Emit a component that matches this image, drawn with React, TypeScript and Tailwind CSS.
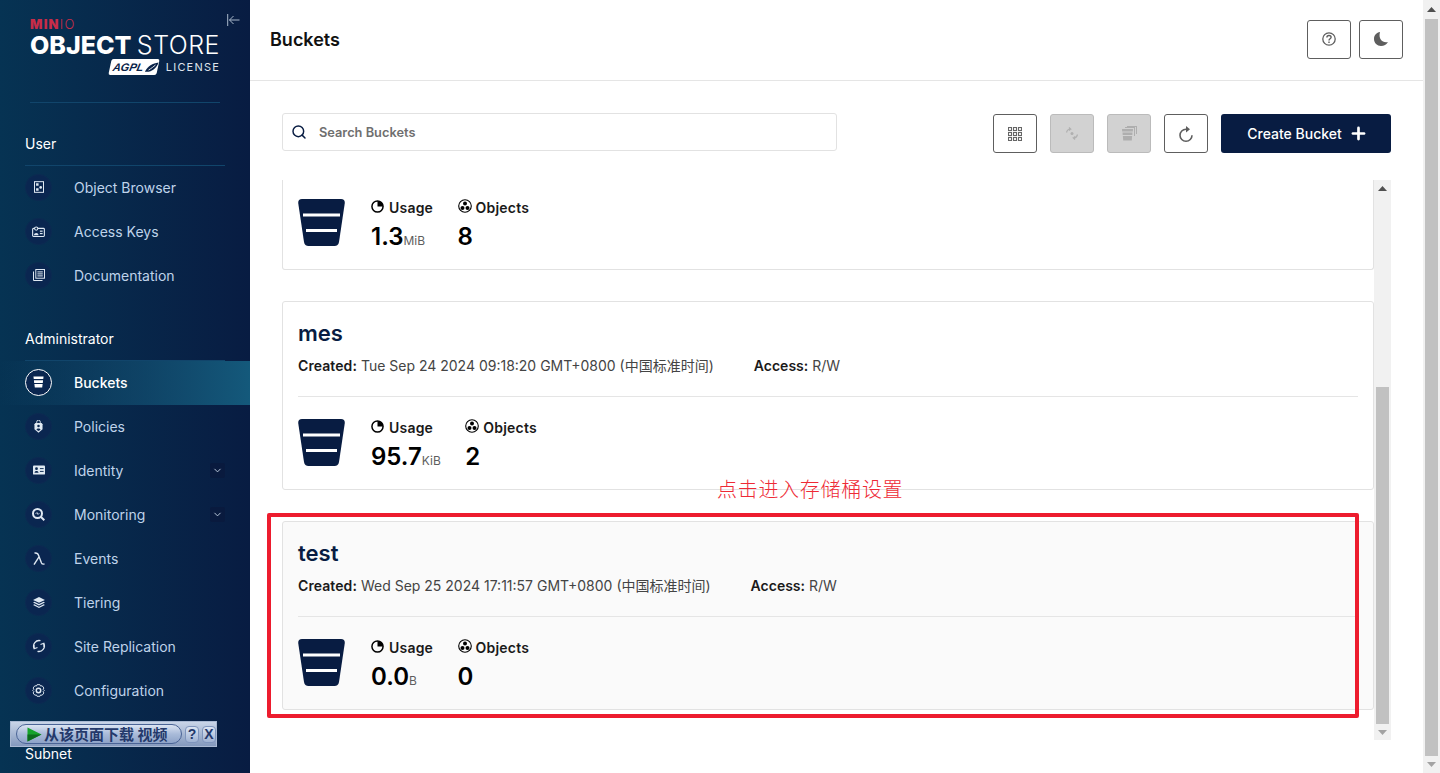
import React from "react";
import { ChevronDown, Plus, Search } from "lucide-react";

const BucketShape = ({ className }: { className?: string }) => (
  <svg viewBox="0 0 47 47" className={className}>
    <path
      d="M4 0H43C45.5 0 47 1.6 46.8 4L41 43C40.6 45.6 39 47 36.5 47H10.5C8 47 6.4 45.6 6 43L0.2 4C0 1.6 1.5 0 4 0Z"
      fill="#081c42"
    />
    <rect x="5" y="14.5" width="37" height="3" fill="#fff" />
    <rect x="8" y="30" width="31" height="3" fill="#fff" />
  </svg>
);

const MenuIcon = ({ name }: { name: string }) => {
  const c = "#dfe8f2";
  switch (name) {
    case "browser":
      return (
        <svg viewBox="0 0 12 14" className="w-[10px] h-[12px]" fill="none">
          <rect x="0.6" y="0.6" width="10.8" height="12.8" stroke={c} strokeWidth="1.2" />
          <rect x="2.5" y="2.5" width="3" height="3" fill={c} />
          <circle cx="8" cy="7.5" r="1.6" fill={c} />
          <rect x="2.5" y="8.5" width="3" height="3" fill={c} />
        </svg>
      );
    case "keys":
      return (
        <svg viewBox="0 0 14 12" className="w-[13px] h-[11px]" fill="none">
          <rect x="0.6" y="2.6" width="12.8" height="8.8" rx="1" stroke={c} strokeWidth="1.2" />
          <circle cx="4.5" cy="2.8" r="1.8" stroke={c} strokeWidth="1.1" fill="#0a2650" />
          <path d="M2 10C2.2 7 7 7 7 10Z" fill={c} />
          <rect x="8.5" y="5" width="3" height="1.3" fill={c} />
          <rect x="8.5" y="7.6" width="3" height="1.3" fill={c} />
        </svg>
      );
    case "docs":
      return (
        <svg viewBox="0 0 12 12" className="w-[12px] h-[12px]" fill="none">
          <rect x="2.8" y="0.5" width="8.7" height="8.7" stroke={c} />
          <path d="M0.5 2.5V11.5H9.5" stroke={c} />
          <rect x="4.4" y="2.4" width="5.4" height="1" fill={c} />
          <rect x="4.4" y="4.4" width="5.4" height="1" fill={c} />
          <rect x="4.4" y="6.4" width="5.4" height="1" fill={c} />
        </svg>
      );
    case "buckets":
      return (
        <svg viewBox="0 0 12 12" className="w-[11px] h-[12px]">
          <path d="M0.5 0H11.5L11.2 2.8H0.8Z" fill="#fff" />
          <path d="M1 4H11L10.7 7H1.3Z" fill="#fff" />
          <path d="M1.5 8.2H10.5L10 12H2Z" fill="#fff" />
        </svg>
      );
    case "policies":
      return (
        <svg viewBox="0 0 10 14" className="w-[9px] h-[13px]" fill="none">
          <path d="M3 3V2A2 2 0 0 1 7 2V3" stroke={c} />
          <path d="M1.5 3H8.5L9.5 4.5V10L5 14L0.5 10V4.5Z" fill={c} />
          <circle cx="5" cy="6.5" r="1.4" fill="#0a2650" />
          <path d="M2.8 10.6C3 8.6 7 8.6 7.2 10.6L5 12Z" fill="#0a2650" />
        </svg>
      );
    case "identity":
      return (
        <svg viewBox="0 0 13 10" className="w-[12px] h-[10px]">
          <rect width="13" height="10" rx="1" fill={c} />
          <circle cx="3.8" cy="3.6" r="1.5" fill="#0a2650" />
          <path d="M1.6 8C1.8 5.6 5.8 5.6 6 8Z" fill="#0a2650" />
          <rect x="7.5" y="3" width="4" height="1" fill="#0a2650" />
          <rect x="7.5" y="6" width="4" height="1" fill="#0a2650" />
        </svg>
      );
    case "monitoring":
      return (
        <svg viewBox="0 0 13 13" className="w-[13px] h-[13px]" fill="none">
          <circle cx="5.5" cy="5.5" r="4.5" stroke={c} strokeWidth="2" />
          <path d="M3.5 6L5 4.5L6 6.5L7.5 5" stroke={c} strokeWidth="0.8" />
          <path d="M9 9L12.3 12.3" stroke={c} strokeWidth="2" />
        </svg>
      );
    case "events":
      return (
        <svg viewBox="0 0 12 13" className="w-[12px] h-[13px]" fill="none" stroke={c} strokeWidth="1.4">
          <path d="M1.5 1C4.5 0.6 5 2 6 4.5L8.5 11C9 12.2 10 12.3 11.5 12" />
          <path d="M6 4.8L1 12.6" />
        </svg>
      );
    case "tiering":
      return (
        <svg viewBox="0 0 13 12" className="w-[12px] h-[11px]">
          <path d="M6.5 0L13 3.2L6.5 6.4L0 3.2Z" fill={c} />
          <path d="M1.5 5.2L6.5 7.7L11.5 5.2L13 6L6.5 9.2L0 6Z" fill={c} />
          <path d="M1.5 8L6.5 10.5L11.5 8L13 8.8L6.5 12L0 8.8Z" fill={c} />
        </svg>
      );
    case "replication":
      return (
        <svg viewBox="0 0 14 14" className="w-[14px] h-[14px]" fill="none">
          <path d="M2.2 9.5A5.5 5.5 0 0 1 8.5 1.7" stroke={c} strokeWidth="1.3" />
          <path d="M11.8 4.5A5.5 5.5 0 0 1 5.5 12.3" stroke={c} strokeWidth="1.3" />
          <path d="M2 6L2.2 9.8L5.5 8.5" stroke={c} strokeWidth="1.1" />
          <path d="M12 8L11.8 4.2L8.5 5.5" stroke={c} strokeWidth="1.1" />
        </svg>
      );
    default:
      return (
        <svg viewBox="0 0 14 14" className="w-[13px] h-[13px]" fill="none">
          <path
            d="M5.5 0.7H8.5L9.2 2.2L10.9 1.9L12.8 4.3L12 5.8L13.2 7L12 8.2L12.8 9.7L10.9 12.1L9.2 11.8L8.5 13.3H5.5L4.8 11.8L3.1 12.1L1.2 9.7L2 8.2L0.8 7L2 5.8L1.2 4.3L3.1 1.9L4.8 2.2Z"
            stroke={c}
          />
          <circle cx="7" cy="7" r="2.4" stroke={c} strokeWidth="1.6" />
        </svg>
      );
  }
};

const MenuItem = ({
  icon,
  label,
  active,
  expand,
}: {
  icon: string;
  label: string;
  active?: boolean;
  expand?: boolean;
}) => (
  <div
    className={`h-[44px] shrink-0 flex items-center pl-[25px] pr-[25px] pb-[2px] ${
      active ? "bg-gradient-to-r from-transparent to-[#14597b]" : ""
    }`}
  >
    <div
      className={`w-[27px] h-[27px] rounded-full flex items-center justify-center shrink-0 bg-[#0a2650] border ${
        active ? "border-white" : "border-[#0c2a52]"
      }`}
    >
      <MenuIcon name={icon} />
    </div>
    <span className={`ml-[22px] text-[14px] flex-1 ${active ? "text-white font-medium" : "text-[#bfd3ea]"}`}>
      {label}
    </span>
    {expand && (
      <div className="w-[15px] h-[15px] bg-[#091a3e] rounded-[2px] flex items-center justify-center">
        <ChevronDown size={11} color="#c6d3e4" />
      </div>
    )}
  </div>
);

const SectionTitle = ({ label }: { label: string }) => (
  <div className="h-[63px] mx-[25px] flex items-end pb-[11px] border-b border-[#11456b] text-[14px] leading-[20px] text-white shrink-0">
    {label}
  </div>
);

const Logo = () => (
  <div className="h-[103px] mx-[30px] border-b border-[#11456b] shrink-0 relative">
    <div className="pt-[17px] h-[31px] text-[13px] leading-[14px] tracking-[1.2px] text-[#c72c48]">
      <span className="font-black">MIN</span>
      <span className="font-light">IO</span>
    </div>
    <div className="mt-[2px] h-[24px] flex justify-between text-[25px] leading-[24px] text-white whitespace-nowrap">
      <span className="font-extrabold">OBJECT</span>
      <span className="font-light tracking-[0.5px]">STORE</span>
    </div>
    <div className="mt-[2px] flex justify-end items-center">
      <div className="w-[48px] h-[16px] bg-white -skew-x-12 rounded-[2px] flex items-center pl-[3px] mr-[8px] overflow-hidden">
        <span className="text-[11px] leading-none font-bold italic text-[#0a2349] font-['Liberation_Sans']">AGPL</span>
        <svg viewBox="0 0 16 14" className="w-[14px] h-[13px] ml-[1px]" fill="none">
          <path d="M1 12C3 5 8 2 15 1C14 8 9 13 1 12Z" fill="#0a2349" />
          <path d="M5 10C8 8 10 6 12 4" stroke="#fff" />
        </svg>
      </div>
      <span className="text-[11px] leading-[16px] tracking-[1.2px] text-[#dfe4ec]">LICENSE</span>
    </div>
  </div>
);

const Sidebar = () => (
  <aside className="w-[250px] h-[773px] shrink-0 overflow-hidden relative flex flex-col bg-gradient-to-r from-[#063353] to-[#081c42]">
    <svg viewBox="0 0 13 12" className="absolute left-[227px] top-[14px] w-[13px] h-[12px]" fill="none" stroke="#a9b8cb">
      <path d="M0.7 0V12M12.5 6H2.5M6.5 2L2.5 6L6.5 10" />
    </svg>
    <Logo />
    <SectionTitle label="User" />
    <MenuItem icon="browser" label="Object Browser" />
    <MenuItem icon="keys" label="Access Keys" />
    <MenuItem icon="docs" label="Documentation" />
    <SectionTitle label="Administrator" />
    <MenuItem icon="buckets" label="Buckets" active />
    <MenuItem icon="policies" label="Policies" />
    <MenuItem icon="identity" label="Identity" expand />
    <MenuItem icon="monitoring" label="Monitoring" expand />
    <MenuItem icon="events" label="Events" />
    <MenuItem icon="tiering" label="Tiering" />
    <MenuItem icon="replication" label="Site Replication" />
    <MenuItem icon="config" label="Configuration" />
    <SectionTitle label="Subnet" />
  </aside>
);

const OutlineButton = ({ children, disabled }: { children: React.ReactNode; disabled?: boolean }) => (
  <div
    className={`w-[44px] h-[39px] rounded-[3px] border flex items-center justify-center ${
      disabled ? "bg-[#d2d2d2] border-[#bbbbbb]" : "bg-white border-[#5e5e5e]"
    }`}
  >
    {children}
  </div>
);

const UsageIcon = () => (
  <svg viewBox="0 0 14 14" className="w-[13px] h-[13px] -mt-[2px] mr-[1px]" fill="none">
    <circle cx="7" cy="7" r="6" stroke="#000" strokeWidth="1.6" />
    <path d="M7 7V1A6 6 0 0 1 13 7Z" fill="#000" />
  </svg>
);

const ObjectsIcon = () => (
  <svg viewBox="0 0 14 14" className="w-[14px] h-[14px] -mt-[3px]" fill="none">
    <circle cx="7" cy="7" r="6.3" stroke="#000" strokeWidth="1.1" />
    <circle cx="7" cy="4.6" r="2" fill="#000" />
    <circle cx="4.5" cy="8.9" r="2" fill="#000" />
    <circle cx="9.5" cy="8.9" r="2" fill="#000" />
  </svg>
);

const Stat = ({
  icon,
  label,
  value,
  unit,
}: {
  icon: React.ReactNode;
  label: string;
  value: string;
  unit?: string;
}) => (
  <div className="flex flex-col">
    <div className="flex items-center gap-[4px] h-[18px] text-[14px] tracking-[0.2px] font-semibold text-[#1a1a1a]">
      {icon}
      {label}
    </div>
    <div className="mt-[7px] h-[28px] flex items-baseline text-[24px] leading-[28px] font-semibold text-black">
      {value}
      {unit && <span className="text-[12px] font-normal text-[#5e5e5e]">{unit}</span>}
    </div>
  </div>
);

type Bucket = {
  name: string;
  created: string;
  usage: string;
  unit: string;
  objects: string;
  hover?: boolean;
};

const buckets: Bucket[] = [
  { name: "mes", created: "Tue Sep 24 2024 09:18:20 GMT+0800 (中国标准时间)", usage: "95.7", unit: "KiB", objects: "2" },
  { name: "test", created: "Wed Sep 25 2024 17:11:57 GMT+0800 (中国标准时间)", usage: "0.0", unit: "B", objects: "0", hover: true },
];

const BucketStats = ({ usage, unit, objects }: { usage: string; unit: string; objects: string }) => (
  <div className="flex">
    <BucketShape className="w-[47px] h-[47px]" />
    <div className="ml-[26px] flex gap-[24.5px] -mt-[1px]">
      <Stat icon={<UsageIcon />} label="Usage" value={usage} unit={unit} />
      <Stat icon={<ObjectsIcon />} label="Objects" value={objects} />
    </div>
  </div>
);

const BucketCard = ({ bucket }: { bucket: Bucket }) => (
  <div
    className={`h-[189px] shrink-0 rounded-[3px] border border-[#e2e2e2] px-[15px] ${
      bucket.hover ? "bg-[#fafafa]" : "bg-white"
    }`}
  >
    <div className="mt-[16px] h-[30px] text-[22px] leading-[30px] font-semibold text-[#081c42]">{bucket.name}</div>
    <div className="mt-[8px] h-[20px] flex gap-[40px] text-[14px] leading-[20px] text-[#444]">
      <span>
        <b className="font-semibold text-[#1a1a1a] tracking-[0.08px]">Created:</b> {bucket.created}
      </span>
      <span>
        <b className="font-semibold text-[#1a1a1a]">Access:</b> R/W
      </span>
    </div>
    <div className="mt-[20px] border-t border-[#e5e5e5] pt-[22px]">
      <BucketStats usage={bucket.usage} unit={bucket.unit} objects={bucket.objects} />
    </div>
  </div>
);

const ScrollArrow = ({ up, color }: { up?: boolean; color: string }) => (
  <svg viewBox="0 0 9 5" className="w-[9px] h-[5px]" fill={color}>
    <path d={up ? "M4.5 0L9 5H0Z" : "M0 0H9L4.5 5Z"} />
  </svg>
);

const Main = () => (
  <main className="flex-1 min-w-0 h-[773px] flex flex-col bg-white">
    <header className="h-[81px] shrink-0 border-b border-[#e5e5e5] flex items-center justify-between pl-[20px] pr-[20px]">
      <h1 className="text-[18px] font-semibold text-[#111] -mt-[1px]">Buckets</h1>
      <div className="flex gap-[8px] -mt-[2px]">
        <OutlineButton>
          <svg viewBox="0 0 14 14" className="w-[14px] h-[14px]" fill="none">
            <circle cx="7" cy="7" r="6.2" stroke="#5e5e5e" strokeWidth="1.3" />
            <path d="M4.9 5.4C4.9 2.8 9.1 2.8 9.1 5.3C9.1 6.9 7 6.7 7 8.6" stroke="#5e5e5e" strokeWidth="1.4" />
            <rect x="6.3" y="9.5" width="1.4" height="1.5" fill="#5e5e5e" />
          </svg>
        </OutlineButton>
        <OutlineButton>
          <svg viewBox="0 0 14 14" className="w-[14px] h-[14px]">
            <path d="M6 0C2.6 0.4 0 3.2 0 7C0 11 3.2 14 7 14C10 14 12.5 12.5 14 10C9 11.5 4 7 6 0Z" fill="#5e5e5e" />
          </svg>
        </OutlineButton>
      </div>
    </header>
    <div className="flex-1 min-h-0 px-[32px] flex flex-col">
      <div className="mt-[32px] h-[40px] flex justify-between shrink-0">
        <div className="w-[555px] h-[38px] border border-[#e2e2e2] rounded-[3px] flex items-center pl-[8px] gap-[12px]">
          <Search size={16} color="#081c42" strokeWidth={2.2} />
          <span className="text-[12.8px] font-semibold text-[#6f6f6f] pt-px">Search Buckets</span>
        </div>
        <div className="flex items-start pt-px gap-[13px]">
          <OutlineButton>
            <svg viewBox="0 0 14 14" className="w-[14px] h-[14px]" fill="none" stroke="#666" strokeWidth="1.1">
              {[0.5, 5.5, 10.5].map((y) =>
                [0.5, 5.5, 10.5].map((x) => <rect key={`${x}-${y}`} x={x} y={y} width="3" height="3" />)
              )}
            </svg>
          </OutlineButton>
          <OutlineButton disabled>
            <svg viewBox="0 0 14 14" className="w-[14px] h-[15px]" fill="none" stroke="#b0b0b0" strokeWidth="1.2">
              <path d="M1.5 6C2 4 3.5 2.5 5.5 2.5L4 1M5.5 2.5L4 4" />
              <path d="M12.5 8C12 10 10.5 11.5 8.5 11.5L10 13M8.5 11.5L10 10" />
              <circle cx="7" cy="7" r="1.5" fill="#b0b0b0" stroke="none" />
            </svg>
          </OutlineButton>
          <OutlineButton disabled>
            <svg viewBox="0 0 15 15" className="w-[15px] h-[15px]" fill="#aeaeae">
              <path d="M0 3H11L10.8 5.4H0.2Z" />
              <path d="M0.5 6.4H10.5L10.3 9H0.7Z" />
              <path d="M0.9 10H10.1L9.8 14.5H1.2Z" />
              <path d="M3 1H13V10H12V2H3Z" />
              <path d="M5 0H15V8H14V1H5Z" />
            </svg>
          </OutlineButton>
          <OutlineButton>
            <svg viewBox="0 0 14 16" className="w-[14px] h-[16px]" fill="none">
              <path d="M7 3.2A6 6 0 1 0 13 9.2" stroke="#5e5e5e" strokeWidth="1.6" />
              <path d="M7 0L11 3.2L7 6.4Z" fill="#5e5e5e" />
            </svg>
          </OutlineButton>
          <div className="w-[170px] h-[39px] rounded-[3px] bg-[#081c42] flex items-center justify-center gap-[7px] pl-[3px] text-white text-[14px] font-medium">
            Create Bucket
            <Plus size={19} strokeWidth={3.4} />
          </div>
        </div>
      </div>
      <div className="mt-[27px] h-[560px] flex shrink-0">
        <div className="w-[1092px] h-full flex flex-col gap-[31px]">
          {/* top card is scrolled away, only its stats are in view */}
          <div className="h-[90px] shrink-0 rounded-b-[3px] border border-t-0 border-[#e2e2e2] px-[15px] pt-[19px]">
            <BucketStats usage="1.3" unit="MiB" objects="8" />
          </div>
          {buckets.map((bucket) => (
            <BucketCard key={bucket.name} bucket={bucket} />
          ))}
        </div>
        <div className="w-[17px] h-full bg-[#f1f1f1] flex flex-col items-center">
          <div className="h-[207px] w-full flex justify-center pt-[6px]">
            <ScrollArrow up color="#505050" />
          </div>
          <div className="w-[13px] h-[337px] bg-[#c1c1c1]" />
          <div className="h-[16px] flex items-center">
            <ScrollArrow color="#a3a3a3" />
          </div>
        </div>
      </div>
    </div>
  </main>
);

const PageScrollbar = () => (
  <div className="w-[17px] h-[773px] shrink-0 bg-[#f1f1f1] flex flex-col items-center">
    <div className="h-[19px] flex items-center">
      <ScrollArrow up color="#505050" />
    </div>
    <div className="w-[13px] h-[737px] bg-[#c1c1c1]" />
    <div className="h-[17px] flex items-center">
      <ScrollArrow color="#a3a3a3" />
    </div>
  </div>
);

const DownloadBar = () => (
  <div className="absolute left-[10px] top-[721px] w-[207px] h-[26px] bg-gradient-to-b from-[#c9d5e8] to-[#8499bd] border border-[#a9b9d3] flex items-center pl-[5px] gap-[3px]">
    <div className="w-[166px] h-[20px] shrink-0 rounded-full border border-[#4a6496] bg-gradient-to-b from-[#dbe4f2] via-[#a9bbd9] to-[#8ea3c8] flex items-center pl-[10px] overflow-hidden">
      <svg viewBox="0 0 15 15" className="w-[15px] h-[15px] shrink-0">
        <path d="M0.5 0.5L14.5 7.5L0.5 14.5Z" fill="#16a32c" />
        <path d="M0.5 7.5H14.5L0.5 14.5Z" fill="#0c6b1d" />
      </svg>
      <span className="ml-[2px] whitespace-nowrap text-[15px] leading-[18px] font-bold text-[#24396b] font-['Noto_Sans_CJK_SC',sans-serif]">
        从该页面下载 视频
      </span>
    </div>
    <div className="w-[15px] h-[17px] rounded-[4px] border border-[#7f95bd] bg-gradient-to-b from-[#dbe4f2] to-[#9fb2d2] text-[#24396b] text-[14px] leading-[15px] font-bold text-center font-['Liberation_Sans']">
      ?
    </div>
    <div className="w-[15px] h-[17px] rounded-[4px] border border-[#7f95bd] bg-gradient-to-b from-[#dbe4f2] to-[#9fb2d2] text-[#24396b] text-[14px] leading-[15px] font-bold text-center font-['Liberation_Sans']">
      X
    </div>
  </div>
);

const App = () => (
  <div className="w-[1440px] h-[773px] overflow-hidden relative flex font-['Inter','Noto_Sans_CJK_SC',sans-serif]">
    <Sidebar />
    <Main />
    <PageScrollbar />
    {/* screenshot annotations */}
    <div className="absolute left-[267px] top-[513px] w-[1092px] h-[205px] border-[4px] border-[#ed1c2e] rounded-[2px]" />
    <div className="absolute left-[717px] top-[477px] text-[20px] leading-[26px] tracking-[0.7px] text-[#ee2a35] font-light">
      点击进入存储桶设置
    </div>
    <DownloadBar />
  </div>
);

export default App;
